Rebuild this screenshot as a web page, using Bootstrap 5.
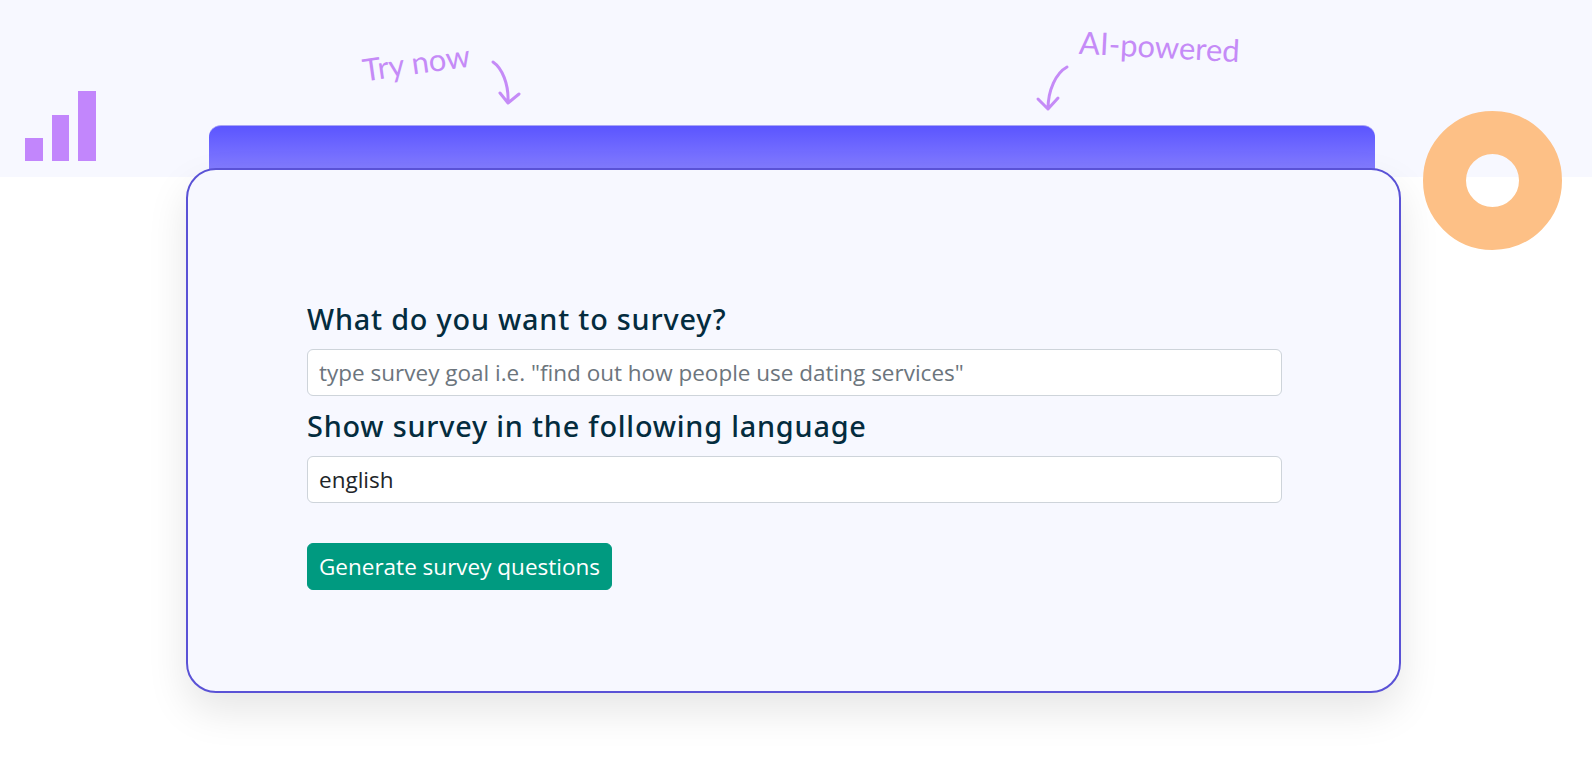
<!DOCTYPE html>
<html lang="en">
<head>
<meta charset="utf-8">
<title>Survey generator</title>
<link href="https://cdn.jsdelivr.net/npm/bootstrap@5.3.0/dist/css/bootstrap.min.css" rel="stylesheet">
<style>
body { background:#fff; font-family:"Open Sans","Noto Sans",sans-serif; overflow:hidden; }
.stage { position:relative; width:1592px; height:761px; }
.band { height:177px; background:#f7f8ff; display:flex; flex-direction:column; justify-content:flex-end; align-items:center; }
.tab-top { width:1166px; height:52px; border-radius:12px 12px 0 0; margin-right:8px; background:linear-gradient(180deg,#5b55ff 0%,#8a83ff 100%); border-top:1px solid #a9a5f5; }
.main-panel { width:1215px; height:525px; margin:-9px 0 0 186px; position:relative; background:#f7f8ff; border:2px solid #5a52d6; border-radius:30px; box-shadow:0 18px 40px rgba(0,0,0,.1); padding:129px 117px 0 119px; }
.field-title { font-family:"Noto Sans",sans-serif; font-size:28.8px; letter-spacing:.8px; font-weight:500; color:#042c3e; line-height:40px; margin:0; }
.field-next { margin-top:10px; }
.field-gap { margin-top:10px; height:47px; font-size:22.5px; color:#212529; border-color:#ced4da; padding:0 11px; line-height:1.5; border-radius:6px; }
.field-gap::placeholder { color:#6c757d; opacity:1; }
.go-btn { margin-top:40px; height:47px; padding:0 11px; font-size:22.5px; color:#fff; background:#009a80; border-color:#009a80; border-radius:6px; }
.bars { position:absolute; left:25px; top:91px; height:70px; display:flex; align-items:flex-end; gap:9px; }
.bar { width:17.5px; background:#c286fc; }
.donut { position:absolute; left:1423px; top:111px; width:139px; height:139px; border-radius:50%; border:43px solid #fdc086; }
.note { position:absolute; color:#c58bf7; font-family:"Lato",sans-serif; font-size:31px; line-height:1; white-space:nowrap; }
.note-try { left:362px; top:47px; transform:rotate(-8deg); }
.note-ai { left:1079px; top:31px; transform:rotate(3deg); }
.arrow { position:absolute; left:0; top:0; }
</style>
</head>
<body>
<div class="stage">
  <div class="band"><div class="tab-top"></div></div>
  <div class="main-panel">
    <h2 class="field-title">What do you want to survey?</h2>
    <input class="form-control field-gap" type="text" placeholder="type survey goal i.e. &quot;find out how people use dating services&quot;">
    <h2 class="field-title field-next">Show survey in the following language</h2>
    <input class="form-control field-gap" type="text" value="english">
    <button class="btn go-btn d-block" type="button">Generate survey questions</button>
  </div>
  <div class="bars"><div class="bar" style="height:23px"></div><div class="bar" style="height:46px"></div><div class="bar" style="height:70px"></div></div>
  <div class="donut"></div>
  <span class="note note-try">Try now</span>
  <span class="note note-ai">AI-powered</span>
  <svg class="arrow" width="1592" height="130" fill="none" stroke="#c58bf7" stroke-width="3" stroke-linecap="round" stroke-linejoin="round">
    <path d="M493 62C502 68 509 84 508 103M500 93L508 103L519 94"/>
    <path d="M1067 67C1056 73 1048 90 1048 109M1038 99L1048 109L1058 98"/>
  </svg>
</div>
<script src="https://cdn.jsdelivr.net/npm/bootstrap@5.3.0/dist/js/bootstrap.bundle.min.js"></script>
</body>
</html>
